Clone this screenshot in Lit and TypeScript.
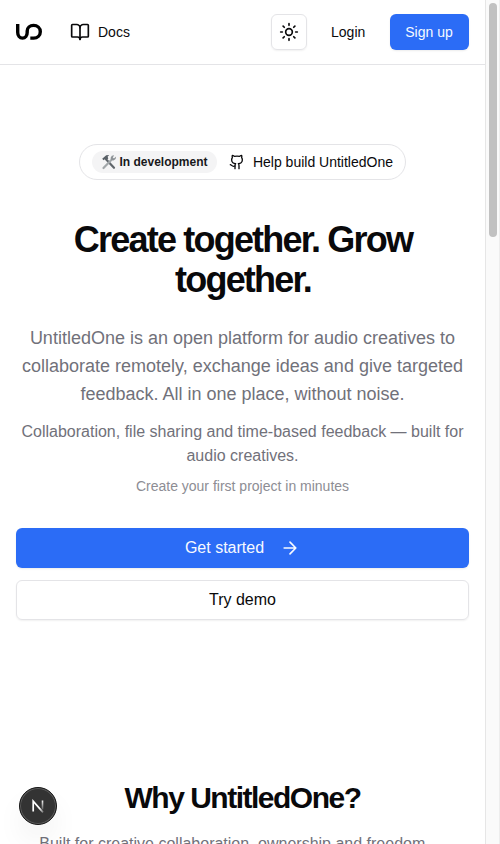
import { LitElement, html, css, svg } from "lit";
import { customElement } from "lit/decorators.js";

@customElement("app-root")
export class AppRoot extends LitElement {
  static styles = css`
    :host { display: flex; width: 500px; height: 844px; overflow: hidden; position: relative; background: #fff; color: #09090b; font-family: "Liberation Sans", Arial, sans-serif; font-size: 14px; }
    * { box-sizing: border-box; }
    svg { display: block; flex: none; }
    h1, h2, p { margin: 0; }
    .page { width: 485px; height: 844px; overflow: hidden; flex: none; }
    .bar { height: 65px; border-bottom: 1px solid #e4e4e7; display: flex; align-items: center; padding: 0 16px; }
    .logo { margin-right: 28px; }
    .docs { display: flex; align-items: center; gap: 8px; line-height: 20px; }
    .spacer { flex: 1; }
    .theme { width: 36px; height: 36px; border: 1px solid #e4e4e7; border-radius: 6px; display: flex; align-items: center; justify-content: center; box-shadow: 0 1px 2px rgba(0,0,0,.06); }
    .login { margin: 0 24.7px 0 24.3px; line-height: 20px; }
    .signup { width: 79px; height: 36px; padding-right: 1px; border-radius: 6px; background: #2b6cf6; color: #f6f9ff; display: flex; align-items: center; justify-content: center; box-shadow: 0 1px 2px rgba(0,0,0,.08); }
    .hero { padding: 79px 16px 0; display: flex; flex-direction: column; align-items: center; text-align: center; }
    .pill { height: 36px; width: 327px; border: 1px solid #e4e4e7; border-radius: 18px; display: flex; align-items: center; padding: 0 12px; white-space: nowrap; }
    .tag { height: 22px; width: 125px; border-radius: 11px; background: #f4f4f5; color: #18181b; font-size: 12px; font-weight: 700; display: flex; align-items: center; gap: 3px; padding-left: 8.5px; margin-right: 12px; }
    .help { margin-left: 8px; }
    h1 { margin-top: 40px; padding-left: 1px; font-size: 36px; line-height: 40px; letter-spacing: -1.8px; width: 400px; }
    .lead { margin-top: 24px; font-size: 18px; line-height: 28px; color: #71717a; white-space: nowrap; }
    .sub { margin-top: 12px; font-size: 16px; line-height: 24px; color: #71717a; white-space: nowrap; }
    .hint { margin-top: 8px; line-height: 20px; color: #8d8d94; }
    .button { width: 100%; height: 40px; border-radius: 6px; display: flex; align-items: center; justify-content: center; font-size: 16px; }
    .primary { margin-top: 32px; background: #2b6cf6; color: #f6f9ff; gap: 16px; box-shadow: 0 1px 2px rgba(0,0,0,.08); }
    .outline { margin-top: 12px; border: 1px solid #e4e4e7; box-shadow: 0 1px 2px rgba(0,0,0,.06); }
    .why { margin-top: 160px; text-align: center; }
    h2 { font-size: 30px; line-height: 36px; letter-spacing: -1.5px; }
    .why p { margin-top: 16px; font-size: 16px; line-height: 24px; color: #71717a; white-space: nowrap; }
    .track { width: 15px; height: 844px; background: #fafafa; border-left: 1px solid #e6e6e6; border-right: 1px solid #ededed; padding: 3px 2px 0 3px; }
    .thumb { width: 8px; height: 234px; border-radius: 4px; background: #c1c1c1; }
    .dev { position: absolute; left: 19px; top: 787px; width: 38px; height: 38px; border-radius: 50%; background: #333; border: 1px solid #171717; box-shadow: inset 0 0 0 1px #5c5c5c, 0 16px 32px -8px rgba(0,0,0,.14); display: flex; align-items: center; justify-content: center; }
  `;

  private icon(size: number, body: unknown, width = 2) {
    return html`<svg width=${size} height=${size} viewBox="0 0 24 24" fill="none" stroke="currentColor" stroke-width=${width} stroke-linecap="round" stroke-linejoin="round">${body}</svg>`;
  }

  render() {
    return html`
      <div class="page">
        <header class="bar">
          <svg class="logo" width="26" height="18" viewBox="0 0 26 18" fill="none" stroke="#000" stroke-width="3.4">
            <path d="M1.7 1V9.2C1.7 12.8 3.7 15.1 6.5 15.1C9.3 15.1 11.2 12.8 11.2 9.2V8C11.2 4.7 14 2.4 17.5 2.4C21.4 2.4 24.3 5.1 24.3 8.7C24.3 12.4 21.4 15.1 17.7 15.1H14.3" />
          </svg>
          <div class="docs">
            ${this.icon(20, svg`<path d="M12 7v14"/><path d="M3 18a1 1 0 0 1-1-1V4a1 1 0 0 1 1-1h5a4 4 0 0 1 4 4 4 4 0 0 1 4-4h5a1 1 0 0 1 1 1v13a1 1 0 0 1-1 1h-6a3 3 0 0 0-3 3 3 3 0 0 0-3-3z"/>`)}
            <span>Docs</span>
          </div>
          <div class="spacer"></div>
          <div class="theme">
            ${this.icon(20, svg`<circle cx="12" cy="12" r="4"/><path d="M12 2v2M12 20v2M4.93 4.93l1.41 1.41M17.66 17.66l1.41 1.41M2 12h2M20 12h2M6.34 17.66l-1.41 1.41M19.07 4.93l-1.41 1.41"/>`)}
          </div>
          <span class="login">Login</span>
          <div class="signup">Sign up</div>
        </header>
        <section class="hero">
          <div class="pill">
            <div class="tag">
              <svg width="16" height="16" viewBox="0 0 16 16" fill="none">
                <path d="M5.2 5.4L13 13.8" stroke="#60666b" stroke-width="2.2" stroke-linecap="round"/>
                <path d="M1.2 4.8L5.2 1.2L8.2 1L6.6 2.8L7.3 4.4L5.2 6.3L3.9 5.2L2.5 6.3Z" fill="#596066"/>
                <path d="M2.5 14L11.3 5" stroke="#a2a7aa" stroke-width="2.2" stroke-linecap="round"/>
                <path d="M13.2 1.2L10.8 1.8L9.5 4L10.3 6L12.5 6.5L14.6 5L15.1 2.6L12.9 4.4L11.8 3.4Z" fill="#8d9397"/>
              </svg>
              <span>In development</span>
            </div>
            ${this.icon(16, svg`<path d="M15 22v-4a4.8 4.8 0 0 0-1-3.5c3 0 6-2 6-5.5.08-1.25-.27-2.48-1-3.5.28-1.15.28-2.35 0-3.5 0 0-1 0-3 1.5-2.64-.5-5.36-.5-8 0C6 2 5 2 5 2c-.3 1.15-.3 2.35 0 3.5A5.403 5.403 0 0 0 4 9c0 3.5 3 5.5 6 5.5-.39.49-.68 1.05-.85 1.65-.17.6-.22 1.23-.15 1.85v4"/><path d="M9 18c-4.51 2-5-2-7-2"/>`)}
            <span class="help">Help build UntitledOne</span>
          </div>
          <h1>Create together. Grow together.</h1>
          <p class="lead">UntitledOne is an open platform for audio creatives to<br>collaborate remotely, exchange ideas and give targeted<br>feedback. All in one place, without noise.</p>
          <p class="sub">Collaboration, file sharing and time-based feedback — built for<br>audio creatives.</p>
          <p class="hint">Create your first project in minutes</p>
          <div class="button primary"><span>Get started</span>
            ${this.icon(20, svg`<path d="M5 12h14M12 5l7 7-7 7"/>`)}
          </div>
          <div class="button outline">Try demo</div>
        </section>
        <section class="why">
          <h2>Why UntitledOne?</h2>
          <p>Built for creative collaboration, ownership and freedom —</p>
        </section>
      </div>
      <div class="track"><div class="thumb"></div></div>
      <div class="dev">
        <svg width="14" height="14" viewBox="0 0 14 14" fill="none">
          <defs>
            <linearGradient id="leg" x1="9" y1="9" x2="12" y2="13" gradientUnits="userSpaceOnUse"><stop stop-color="#fff"/><stop offset="1" stop-color="#fff" stop-opacity=".35"/></linearGradient>
            <linearGradient id="stem" x1="0" y1="1" x2="0" y2="11" gradientUnits="userSpaceOnUse"><stop stop-color="#fff"/><stop offset="1" stop-color="#fff" stop-opacity=".15"/></linearGradient>
          </defs>
          <path d="M2.2 12.4V2.2L12 13.4" stroke="url(#leg)" stroke-width="1.7"/>
          <path d="M11.5 1.5V10.5" stroke="url(#stem)" stroke-width="1.6"/>
        </svg>
      </div>
    `;
  }
}
